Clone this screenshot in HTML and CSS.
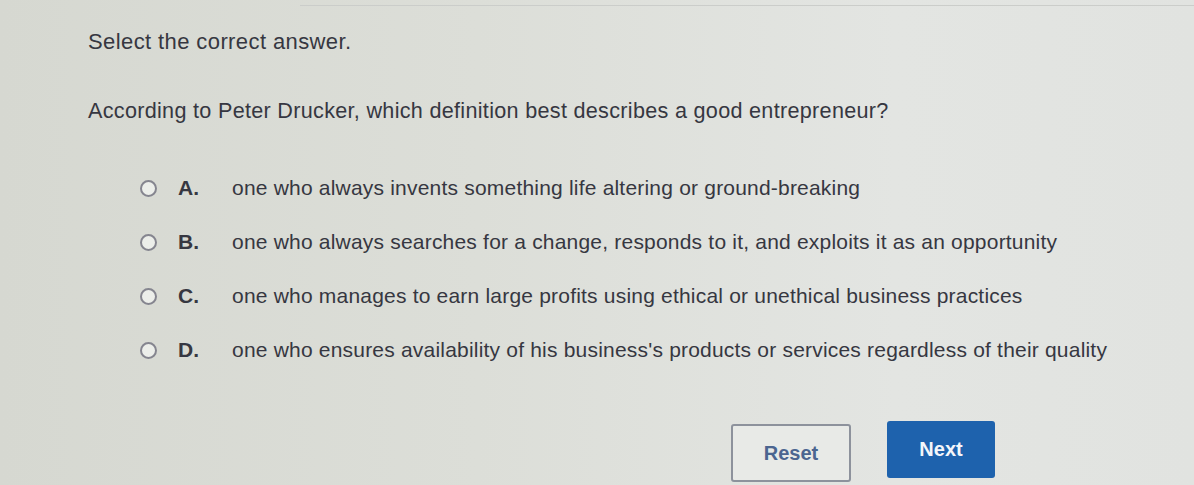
FILE: index.html
```html
<!DOCTYPE html>
<html lang="en">
<head>
<meta charset="utf-8">
<title>Select the correct answer</title>
<link rel="stylesheet" href="styles.css">
</head>
<body>
<div class="page">
  <div class="topline"></div>
  <main class="quiz">
    <p class="instr">Select the correct answer.</p>
    <p class="question">According to Peter Drucker, which definition best describes a good entrepreneur?</p>
    <ul class="options">
      <li class="option"><span class="radio"></span><span class="letter">A.</span><span class="text">one who always invents something life altering or ground-breaking</span></li>
      <li class="option"><span class="radio"></span><span class="letter">B.</span><span class="text">one who always searches for a change, responds to it, and exploits it as an opportunity</span></li>
      <li class="option"><span class="radio"></span><span class="letter">C.</span><span class="text">one who manages to earn large profits using ethical or unethical business practices</span></li>
      <li class="option"><span class="radio"></span><span class="letter">D.</span><span class="text">one who ensures availability of his business's products or services regardless of their quality</span></li>
    </ul>
    <div class="actions">
      <button class="btn btn-reset">Reset</button>
      <button class="btn btn-next">Next</button>
    </div>
  </main>
</div>
</body>
</html>
```
FILE: styles.css
```css
html, body {
  margin: 0;
  padding: 0;
}
body {
  width: 1194px;
  height: 485px;
  overflow: hidden;
  background: linear-gradient(90deg, #d6d8d1 0%, #dcded8 40%, #e3e5e2 75%, #e1e3e0 100%);
  font-family: "Liberation Sans", Arial, sans-serif;
  color: #363741;
}
.page {
  position: relative;
  height: 485px;
}
.topline {
  height: 5px;
  border-bottom: 1px solid #cbcdca;
  margin-left: 300px;
}
.quiz {
  padding-left: 88px;
}
.instr {
  margin: 23px 0 0;
  font-size: 22px;
  line-height: 26px;
  letter-spacing: 0.4px;
}
.question {
  margin: 43px 0 0;
  font-size: 21.6px;
  line-height: 26px;
  letter-spacing: 0.3px;
}
.options {
  list-style: none;
  margin: 37px 0 0;
  padding: 0 0 0 52px;
}
.option {
  display: flex;
  align-items: center;
  height: 54px;
  font-size: 21px;
}
.radio {
  width: 13px;
  height: 13px;
  border: 2px solid #85858f;
  border-radius: 50%;
  background: #eceeea;
  flex: none;
}
.letter {
  width: 54px;
  margin-left: 21px;
  font-weight: bold;
  flex: none;
}
.text {
  white-space: nowrap;
  letter-spacing: 0.2px;
}
.actions {
  display: flex;
  align-items: flex-start;
  gap: 36px;
  margin-top: 44px;
  padding-left: 643px;
}
.btn {
  font-family: "Liberation Sans", Arial, sans-serif;
  font-size: 20px;
  font-weight: bold;
  border-radius: 3px;
  cursor: pointer;
}
.btn-reset {
  width: 120px;
  height: 58px;
  margin-top: 3px;
  background: #e8eae7;
  border: 2px solid #8d929c;
  color: #4b6590;
}
.btn-next {
  width: 108px;
  height: 57px;
  background: #1e62ad;
  border: none;
  color: #f4f6fa;
}
```
